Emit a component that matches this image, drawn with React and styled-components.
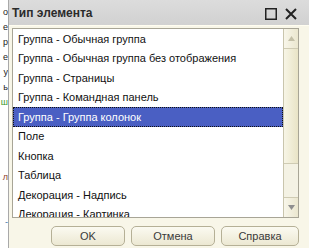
import styled, { createGlobalStyle } from "styled-components";

const GlobalStyle = createGlobalStyle`
  html, body {
    margin: 0;
    padding: 0;
    background: #ffffff;
  }
  body {
    font-family: "Liberation Sans", sans-serif;
  }
`;

const Screen = styled.div`
  display: flex;
  width: 309px;
  height: 248px;
  overflow: hidden;
`;

const BackStrip = styled.div`
  width: 8px;
  flex: none;
  display: flex;
  flex-direction: column;
  padding-top: 5px;
  background: #ffffff;
  overflow: hidden;
  font-family: "Liberation Sans", sans-serif;
  font-size: 9px;
  line-height: 15px;
  color: #222;
  border-right: 1px solid #a9a9a9;
`;

const Frag = styled.span`
  color: ${(p) => p.$color || "#222"};
  white-space: nowrap;
  text-align: right;
`;

const Dialog = styled.div`
  flex: 1;
  display: flex;
  flex-direction: column;
  background: #f8f6e8;
`;

const TitleBar = styled.div`
  height: 25px;
  flex: none;
  display: flex;
  align-items: center;
  justify-content: space-between;
  padding: 0 12px 0 3px;
  background: linear-gradient(#dcdcdc, #d1d1d1);
`;

const Title = styled.div`
  font-weight: bold;
  font-size: 12px;
  color: #2b2b2b;
  padding-top: 1px;
`;

const Controls = styled.div`
  display: flex;
  align-items: center;
  gap: 8px;
  padding-top: 2px;
`;

const Body = styled.div`
  flex: 1;
  display: flex;
  flex-direction: column;
  padding: 2px 10px 0 3px;
  border-top: 1px solid #fffdf0;
`;

const ListBox = styled.div`
  height: 188px;
  flex: none;
  display: flex;
  border: 1px solid #a8a596;
  background: #ffffff;
  overflow: hidden;
`;

const Items = styled.div`
  flex: 1;
  display: flex;
  flex-direction: column;
`;

const Item = styled.div`
  height: 19.5px;
  flex: none;
  display: flex;
  align-items: center;
  padding-left: 5px;
  font-size: 11px;
  white-space: nowrap;
  color: ${(p) => (p.$selected ? "#ffffff" : "#111111")};
  background: ${(p) => (p.$selected ? "#4a5fc3" : "transparent")};
  outline: ${(p) => (p.$selected ? "1px dotted #111" : "none")};
  outline-offset: -1px;
`;

const ScrollBar = styled.div`
  width: 14px;
  flex: none;
  display: flex;
  flex-direction: column;
  border-left: 1px solid #c9c5ad;
  background: #f4f2e4;
`;

const ScrollButton = styled.div`
  height: 19px;
  flex: none;
  display: flex;
  align-items: center;
  justify-content: center;
  background: linear-gradient(90deg, #f8f6ea, #ebe7cf);
  border-top: ${(p) => (p.$down ? "1px solid #cfcbb3" : "none")};
  border-bottom: ${(p) => (p.$down ? "none" : "1px solid #cfcbb3")};
`;

const Thumb = styled.div`
  height: 114px;
  flex: none;
  background: linear-gradient(90deg, #f7f5e6, #e9e4c6);
  border-bottom: 1px solid #cfcbb3;
`;

const Track = styled.div`
  flex: 1;
`;

const Footer = styled.div`
  display: flex;
  justify-content: flex-end;
  gap: 6px;
  padding-top: 8px;
`;

const Button = styled.button`
  width: ${(p) => p.$w}px;
  height: 20px;
  font-family: "Liberation Sans", sans-serif;
  font-size: 11px;
  color: #3a3a3a;
  border: 1px solid #b5b096;
  border-radius: 5px;
  background: linear-gradient(#fbfaf1, #ece8d2);
  padding: 0;
`;

const items = [
  "Группа - Обычная группа",
  "Группа - Обычная группа без отображения",
  "Группа - Страницы",
  "Группа - Командная панель",
  "Группа - Группа колонок",
  "Поле",
  "Кнопка",
  "Таблица",
  "Декорация - Надпись",
  "Декорация - Картинка",
];

const fragments = [
  ["о"],
  ["е"],
  ["р"],
  ["е"],
  ["у"],
  ["ь"],
  ["ш", "#3c9a2c"],
  [""],
  [""],
  [""],
  [""],
  ["л", "#8a3a2a"],
  [""],
  [""],
  ["-", "#3a6fa8"],
];

function App() {
  return (
    <>
      <GlobalStyle />
      <Screen>
        <BackStrip>
          {fragments.map(([t, c], i) => (
            <Frag key={i} $color={c}>
              {t || "\u00a0"}
            </Frag>
          ))}
        </BackStrip>
        <Dialog>
          <TitleBar>
            <Title>Тип элемента</Title>
            <Controls>
              <svg width="12" height="12" viewBox="0 0 12 12">
                <rect x="0.75" y="0.75" width="10.5" height="10.5" fill="none" stroke="#222" strokeWidth="1.5" />
              </svg>
              <svg width="12" height="12" viewBox="0 0 12 12">
                <path d="M1 1 L11 11 M11 1 L1 11" stroke="#222" strokeWidth="2" />
              </svg>
            </Controls>
          </TitleBar>
          <Body>
            <ListBox>
              <Items>
                {items.map((t, i) => (
                  <Item key={t} $selected={i === 4}>
                    {t}
                  </Item>
                ))}
              </Items>
              <ScrollBar>
                <ScrollButton>
                  <svg width="7" height="5" viewBox="0 0 7 5">
                    <path d="M3.5 0 L7 5 L0 5 Z" fill="#c4c0a8" />
                  </svg>
                </ScrollButton>
                <Thumb />
                <Track />
                <ScrollButton $down>
                  <svg width="7" height="5" viewBox="0 0 7 5">
                    <path d="M0 0 L7 0 L3.5 5 Z" fill="#8f8f8f" />
                  </svg>
                </ScrollButton>
              </ScrollBar>
            </ListBox>
            <Footer>
              <Button $w={74}>OK</Button>
              <Button $w={84}>Отмена</Button>
              <Button $w={78}>Справка</Button>
            </Footer>
          </Body>
        </Dialog>
      </Screen>
    </>
  );
}

export default App;
